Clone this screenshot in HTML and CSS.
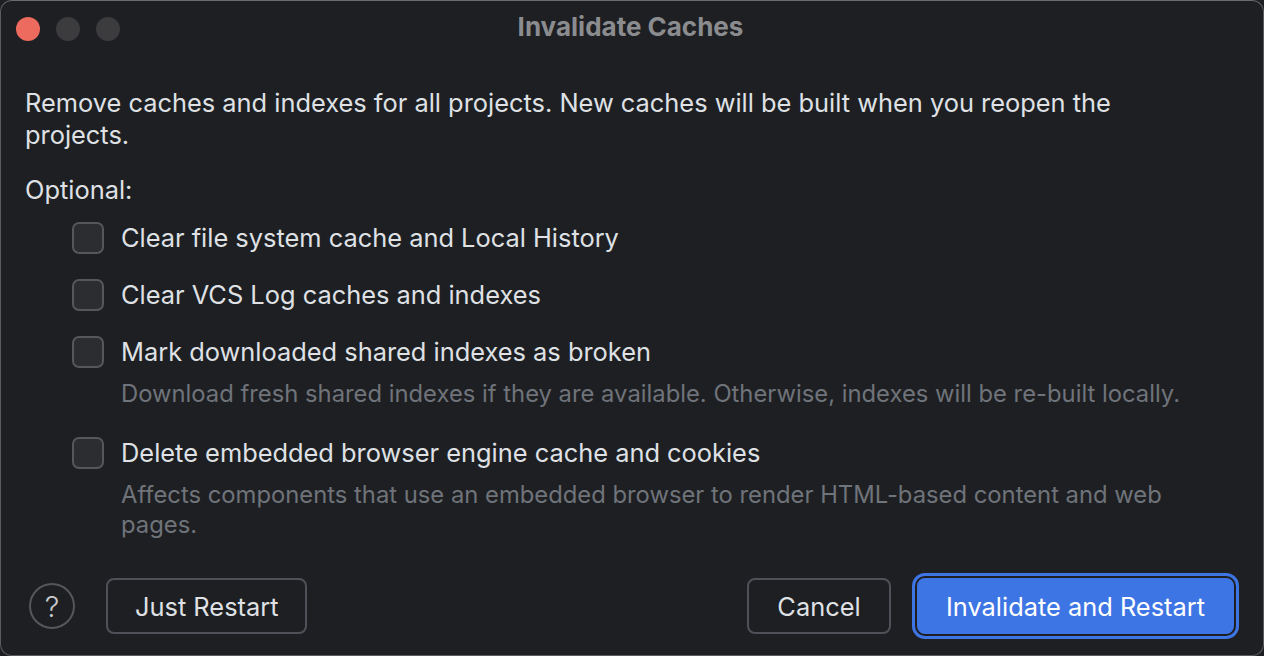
FILE: index.html
```html
<!DOCTYPE html>
<html>
<head>
<meta charset="utf-8">
<link rel="stylesheet" href="styles.css">
</head>
<body>
<div class="window">
  <div class="titlebar">
    <div class="lights">
      <span class="light red"></span>
      <span class="light"></span>
      <span class="light"></span>
    </div>
    <div class="title">Invalidate Caches</div>
    <div></div>
  </div>
  <div class="content">
    <p class="intro">Remove caches and indexes for all projects. New caches will be built when you reopen the projects.</p>
    <p class="optional">Optional:</p>
    <div class="options">
      <div class="option">
        <div class="row"><span class="box"></span><span class="label">Clear file system cache and Local History</span></div>
      </div>
      <div class="option">
        <div class="row"><span class="box"></span><span class="label">Clear VCS Log caches and indexes</span></div>
      </div>
      <div class="option">
        <div class="row"><span class="box"></span><span class="label">Mark downloaded shared indexes as broken</span></div>
        <div class="desc">Download fresh shared indexes if they are available. Otherwise, indexes will be re-built locally.</div>
      </div>
      <div class="option">
        <div class="row"><span class="box"></span><span class="label">Delete embedded browser engine cache and cookies</span></div>
        <div class="desc">Affects components that use an embedded browser to render HTML-based content and web pages.</div>
      </div>
    </div>
  </div>
  <div class="footer">
    <div class="left">
      <span class="help">?</span>
      <span class="btn">Just Restart</span>
    </div>
    <div class="right">
      <span class="btn cancel">Cancel</span>
      <span class="btn primary">Invalidate and Restart</span>
    </div>
  </div>
</div>
</body>
</html>
```
FILE: styles.css
```css
* { box-sizing: border-box; }
html, body { margin: 0; padding: 0; background: #1e1f22; }
body { font-family: "Inter", "Noto Sans", sans-serif; color: #dfe1e5; }
.window {
  width: 1264px;
  height: 656px;
  border: 1px solid #5a5b5e;
  border-top-color: #6a6b6e;
  border-radius: 12px;
  background: #1e1f22;
  display: flex;
  flex-direction: column;
  overflow: hidden;
}
.titlebar {
  height: 54px;
  display: grid;
  grid-template-columns: 1fr auto 1fr;
  align-items: center;
}
.lights { display: flex; gap: 16px; padding-left: 15px; padding-top: 1px; }
.light { width: 24px; height: 24px; border-radius: 50%; background: #3c3c3e; }
.light.red { background: #ed6a5e; }
.title { font-size: 26px; font-weight: 700; color: #8b8c8f; padding-bottom: 3px; padding-right: 3px; }
.content { padding: 32px 24px 0 24px; font-size: 25.4px; }
.intro { margin: 0; line-height: 32px; max-width: 1130px; }
.optional { margin: 23px 0 0 0; line-height: 32px; }
.options { margin-top: 16px; padding-left: 47px; display: flex; flex-direction: column; gap: 25px; }
.option:last-child { margin-top: 3px; }
.row { display: flex; align-items: center; height: 32px; gap: 17px; }
.box {
  width: 32px; height: 32px;
  border: 2px solid #55575b;
  border-radius: 7px;
  background: #2b2d30;
  flex: none;
}
.label { line-height: 32px; }
.desc {
  margin-top: 11px;
  padding-left: 49px;
  font-size: 23.8px;
  line-height: 30px;
  color: #6f737a;
  max-width: 1135px;
}
.footer {
  margin-top: auto;
  padding: 0 29px 21px 28px;
  display: flex;
  justify-content: space-between;
  align-items: center;
}
.left, .right { display: flex; align-items: center; }
.left { gap: 31px; }
.right { gap: 26px; }
.help {
  width: 46px; height: 46px;
  border: 2px solid #55575b;
  border-radius: 50%;
  display: flex; align-items: center; justify-content: center;
  font-size: 29px; font-weight: 300; color: #c9cbcf;
}
.btn {
  height: 56px;
  padding: 0 27px;
  border: 2px solid #4e5157;
  border-radius: 8px;
  display: flex; align-items: center; justify-content: center;
  font-size: 25.4px;
  color: #dfe1e5;
  white-space: nowrap;
}
.btn.cancel { width: 144px; padding: 0; }
.primary {
  width: 317px;
  padding: 0;
  background: #3e75e4;
  border-color: #3e75e4;
  color: #ffffff;
  box-shadow: 0 0 0 2px #1e1f22, 0 0 0 5px #3e75e4;
}
```
